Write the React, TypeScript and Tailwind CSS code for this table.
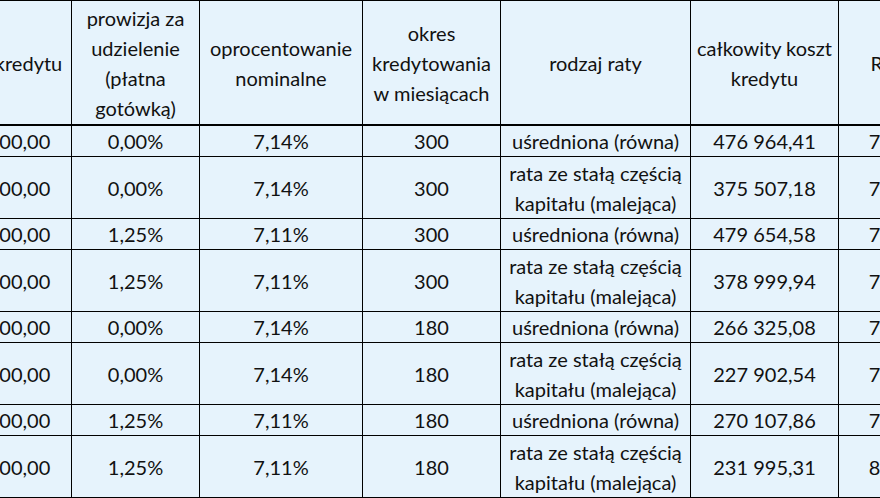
import React from "react";

const rows: { cells: string[] }[] = [
  { cells: ["400 000,00", "0,00%", "7,14%", "300", "uśredniona (równa)", "476 964,41", "7,58%"] },
  { cells: ["400 000,00", "0,00%", "7,14%", "300", "rata ze stałą częścią kapitału (malejąca)", "375 507,18", "7,49%"] },
  { cells: ["400 000,00", "1,25%", "7,11%", "300", "uśredniona (równa)", "479 654,58", "7,66%"] },
  { cells: ["400 000,00", "1,25%", "7,11%", "300", "rata ze stałą częścią kapitału (malejąca)", "378 999,94", "7,59%"] },
  { cells: ["400 000,00", "0,00%", "7,14%", "180", "uśredniona (równa)", "266 325,08", "7,71%"] },
  { cells: ["400 000,00", "0,00%", "7,14%", "180", "rata ze stałą częścią kapitału (malejąca)", "227 902,54", "7,64%"] },
  { cells: ["400 000,00", "1,25%", "7,11%", "180", "uśredniona (równa)", "270 107,86", "7,89%"] },
  { cells: ["400 000,00", "1,25%", "7,11%", "180", "rata ze stałą częścią kapitału (malejąca)", "231 995,31", "8,02%"] },
];

const headers = [
  "kwota kredytu",
  "prowizja za udzielenie (płatna gotówką)",
  "oprocentowanie nominalne",
  "okres kredytowania w miesiącach",
  "rodzaj raty",
  "całkowity koszt kredytu",
  "RRSO",
];

function Cell({ children, head }: { children: React.ReactNode; head?: boolean }) {
  return (
    <div
      className={
        head
          ? "flex items-center justify-center text-center px-1 border-r border-b-2 border-black leading-[30px]"
          : "flex items-center justify-center text-center px-1 border-r border-b border-black leading-[30px]"
      }
    >
      {children}
    </div>
  );
}

export default function App() {
  return (
    <div className="w-[880px] h-[498px] overflow-hidden bg-white">
      <div
        className="ml-[-73px] w-[1028px] border-t border-black bg-[#e6f3fc] text-[#111111] text-[20px]"
        style={{
          fontFamily: "Lato, 'Noto Sans', sans-serif",
        }}
      >
        <div className="grid grid-cols-[145px_128px_163px_138px_190px_148px_116px] grid-rows-[125px_31px_62px_31px_62px_31px_62px_31px_62px]">
          {headers.map((h, i) => (
            <Cell key={"h" + i} head>
              {h}
            </Cell>
          ))}
          {rows.map((r, ri) =>
            r.cells.map((c, ci) => (
              <Cell key={ri + "-" + ci}>{c}</Cell>
            ))
          )}
        </div>
      </div>
    </div>
  );
}
